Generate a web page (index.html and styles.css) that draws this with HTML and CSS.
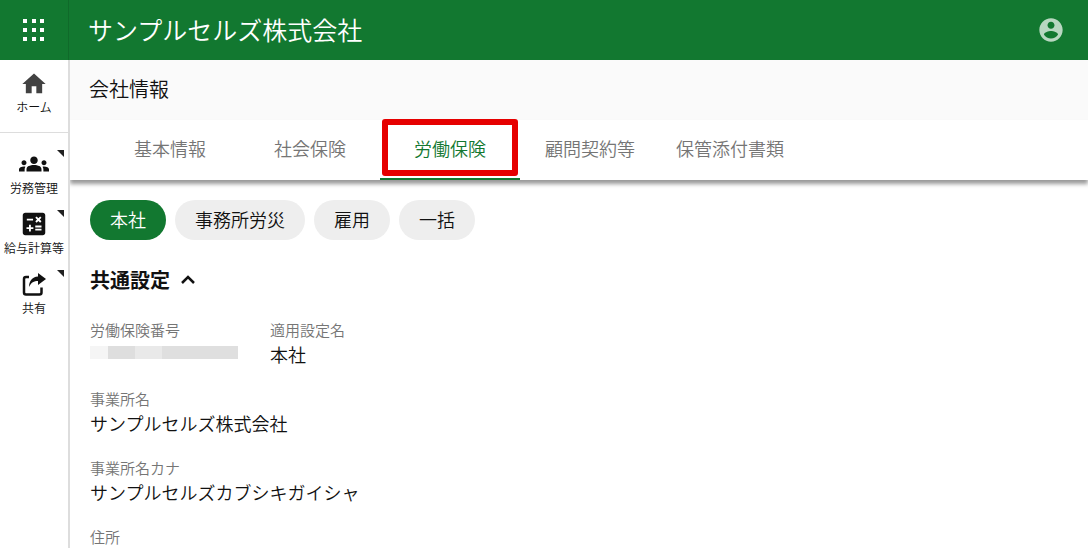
FILE: index.html
```html
<!DOCTYPE html>
<html lang="ja">
<head>
    <meta charset="utf-8">
    <meta name="viewport" content="width=device-width, initial-scale=1">
    <title>会社情報</title>
    <link rel="stylesheet" href="styles.css">
</head>
<body>
    <header class="header">
        <button type="button" class="menu-button" aria-label="メニュー">
            <svg width="22" height="24" viewBox="0 0 22 24">
                <path d="M0 1h4v4H0zM9 1h4v4H9zM17 1h4v4h-4zM0 10h4v4H0zM9 10h4v4H9zM17 10h4v4h-4zM0 19h4v4H0zM9 19h4v4H9zM17 19h4v4h-4z"/>
            </svg>
        </button>
        <div class="company-name">サンプルセルズ株式会社</div>
        <button type="button" class="account-button" aria-label="アカウント">
            <svg width="28" height="28" viewBox="0 0 24 24">
                <path d="M12 2C6.48 2 2 6.48 2 12s4.48 10 10 10 10-4.480 10-10S17.520 2 12 2zm0 3c1.660 0 3 1.340 3 3s-1.340 3-3 3-3-1.340-3-3 1.340-3 3-3zm0 14.200c-2.500 0-4.710-1.280-6-3.220.03-1.990 4-3.080 6-3.080 1.990 0 5.970 1.090 6 3.080-1.290 1.940-3.500 3.220-6 3.220z"/>
            </svg>
        </button>
    </header>

    <div class="layout">
        <nav class="sidebar">
            <a href="#" class="side-item home">
                <svg width="28" height="28" viewBox="0 0 24 24"><path d="M10 20v-6h4v6h5v-8h3L12 3 2 12h3v8z"/></svg>
                <span>ホーム</span>
            </a>
            <a href="#" class="side-item has-sub">
                <svg width="30" height="30" viewBox="0 0 24 24"><path d="M12 12.75c1.63 0 3.07.39 4.24.9 1.08.48 1.76 1.56 1.76 2.73V18H6v-1.61c0-1.18.68-2.26 1.76-2.73 1.17-.52 2.61-.91 4.24-.91zM4 13c1.1 0 2-.9 2-2s-.9-2-2-2-2 .9-2 2 .9 2 2 2zm1.13 1.1C4.76 14.04 4.39 14 4 14c-.99 0-1.93.21-2.78.58C.48 14.9 0 15.62 0 16.43V18h4.5v-1.61c0-.83.23-1.61.63-2.29zM20 13c1.1 0 2-.9 2-2s-.9-2-2-2-2 .9-2 2 .9 2 2 2zm4 3.43c0-.81-.48-1.53-1.22-1.85-.85-.37-1.79-.58-2.78-.58-.39 0-.76.04-1.13.1.4.68.63 1.46.63 2.29V18H24v-1.57zM12 6c1.66 0 3 1.34 3 3s-1.34 3-3 3-3-1.34-3-3 1.34-3 3-3z"/></svg>
                <span>労務管理</span>
            </a>
            <a href="#" class="side-item has-sub">
                <svg width="30" height="30" viewBox="0 0 24 24"><path d="M19 3H5c-1.1 0-2 .9-2 2v14c0 1.1.9 2 2 2h14c1.1 0 2-.9 2-2V5c0-1.1-.9-2-2-2zm-5.97 4.06L14.09 6l1.41 1.41L16.91 6l1.06 1.06-1.41 1.41 1.41 1.41-1.06 1.06-1.41-1.4-1.41 1.41-1.06-1.06 1.41-1.41-1.41-1.42zM6.25 7.72h5v1.5h-5v-1.5zM11.5 16h-2v2H8v-2H6v-1.5h2v-2h1.5v2h2V16zm6.5 1.25h-5v-1.5h5v1.5zm0-2.5h-5v-1.5h5v1.5z"/></svg>
                <span>給与計算等</span>
            </a>
            <a href="#" class="side-item has-sub">
                <svg width="30" height="30" viewBox="0 0 30 30">
                    <path d="M10 8H7q-2 0-2 2v13.500q0 2 2 2h13.500q2 0 2-2v-5" fill="none" stroke="currentColor" stroke-width="2.500"/>
                    <path d="M19 4l8 6-8 6v-4c-4 0-7 1.500-9 6 0-6 3-10 9-10.500z"/>
                </svg>
                <span>共有</span>
            </a>
        </nav>

        <main class="main">
            <h1 class="page-title">会社情報</h1>
            <nav class="tabs">
                <a href="#" class="tab">基本情報</a>
                <a href="#" class="tab">社会保険</a>
                <a href="#" class="tab active" aria-current="page">労働保険</a>
                <a href="#" class="tab">顧問契約等</a>
                <a href="#" class="tab">保管添付書類</a>
            </nav>

            <div class="content">
                <div class="chips">
                    <button type="button" class="chip selected">本社</button>
                    <button type="button" class="chip">事務所労災</button>
                    <button type="button" class="chip">雇用</button>
                    <button type="button" class="chip">一括</button>
                </div>

                <h2 class="section-title">
                    <button type="button" class="section-toggle" aria-expanded="true">
                        共通設定
                        <svg width="16" height="12" viewBox="0 0 16 12"><path d="M2 10l6-6 6 6" fill="none" stroke="currentColor" stroke-width="2.500"/></svg>
                    </button>
                </h2>

                <dl class="fields">
                    <div class="field">
                        <dt>労働保険番号</dt>
                        <dd><span class="masked"></span></dd>
                    </div>
                    <div class="field">
                        <dt>適用設定名</dt>
                        <dd>本社</dd>
                    </div>
                    <div class="field wide">
                        <dt>事業所名</dt>
                        <dd>サンプルセルズ株式会社</dd>
                    </div>
                    <div class="field wide">
                        <dt>事業所名カナ</dt>
                        <dd>サンプルセルズカブシキガイシャ</dd>
                    </div>
                    <div class="field wide">
                        <dt>住所</dt>
                    </div>
                </dl>
            </div>
        </main>
    </div>
</body>
</html>
```

FILE: styles.css
```css
*,
*::after {
    box-sizing: border-box;
}

body {
    margin: 0;
    height: 100vh;
    display: flex;
    flex-direction: column;
    overflow: hidden;
    font-family: "Noto Sans CJK JP", sans-serif;
    font-weight: 350;
    font-size: 18px;
    color: #111;
    background: #fff;
}

button {
    font: inherit;
    color: inherit;
    border: none;
    background: none;
    padding: 0;
    cursor: pointer;
}

a {
    color: inherit;
    text-decoration: none;
}

svg {
    display: block;
    fill: currentColor;
}

/* header */
.header {
    display: flex;
    align-items: center;
    flex: none;
    height: 60px;
    padding-right: 23px;
    background: #127830;
    color: #fff;
}

.menu-button {
    display: flex;
    align-items: center;
    justify-content: center;
    width: 69px;
    height: 100%;
    border-right: 1px solid #0f6a2a;
}

.company-name {
    flex: 1;
    padding-left: 19px;
    font-size: 25px;
    line-height: 58px;
    height: 60px;
}

.account-button {
    color: #b8d7c1;
}

/* sidebar */
.layout {
    display: flex;
    flex: 1;
    min-height: 0;
}

.sidebar {
    flex: none;
    width: 70px;
    border-right: 2px solid #ddd;
}

.side-item {
    position: relative;
    display: flex;
    flex-direction: column;
    align-items: center;
    height: 60px;
    font-size: 12px;
    line-height: 18px;
    white-space: nowrap;
}

.side-item.home {
    height: 73px;
    margin-bottom: 16px;
    padding-top: 10px;
    border-bottom: 1px solid #ddd;
}

.home svg {
    color: #424242;
}

.has-sub::after {
    content: "";
    position: absolute;
    top: 1px;
    right: 4px;
    border-top: 7px solid #212121;
    border-left: 7px solid transparent;
}

/* main */
.main {
    flex: 1;
    min-width: 0;
    overflow: hidden;
}

.page-title {
    margin: 0;
    padding-left: 19px;
    height: 60px;
    background: #fafafa;
    font-size: 20px;
    font-weight: 350;
    line-height: 58px;
}

.tabs {
    display: flex;
    padding-left: 30px;
    height: 60px;
    background: #fff;
    box-shadow: 0 4px 4px rgba(0, 0, 0, 0.4);
}

.tab {
    position: relative;
    width: 140px;
    color: #757575;
    line-height: 56px;
    text-align: center;
    white-space: nowrap;
    border-bottom: 2px solid transparent;
}

.tab.active {
    color: #127830;
    border-bottom-color: #127830;
}

.tab.active::after {
    content: "";
    position: absolute;
    top: -1px;
    left: 2px;
    right: 2px;
    height: 57px;
    border: 6px solid #e60000;
    border-radius: 3px;
}

.content {
    padding: 20px;
}

.chips {
    display: flex;
    gap: 9px;
}

.chip {
    height: 40px;
    padding: 0 20px 2px;
    border-radius: 20px;
    background: #eee;
    line-height: 38px;
}

.chip.selected {
    background: #127830;
    color: #fff;
}

.section-title {
    margin: 20px 0 18px;
    font-size: 20px;
    font-weight: 700;
}

.section-toggle {
    display: flex;
    align-items: center;
    gap: 10px;
    height: 40px;
    padding-bottom: 2px;
}

.fields {
    display: grid;
    grid-template-columns: 180px 1fr;
    row-gap: 20px;
    margin: 0;
}

.wide {
    grid-column: 1 / -1;
}

.field dt {
    color: #757575;
    font-size: 15px;
    line-height: 24px;
}

.field dd {
    margin: 0;
    height: 25px;
    line-height: 24px;
}

.masked {
    display: block;
    width: 148px;
    height: 17px;
    border-top: 4px solid #fff;
    background: linear-gradient(to right, #f5f5f5 18px, #dedede 18px 45px, #e9e9e9 45px 72px, #dfdfdf 72px);
}
```
